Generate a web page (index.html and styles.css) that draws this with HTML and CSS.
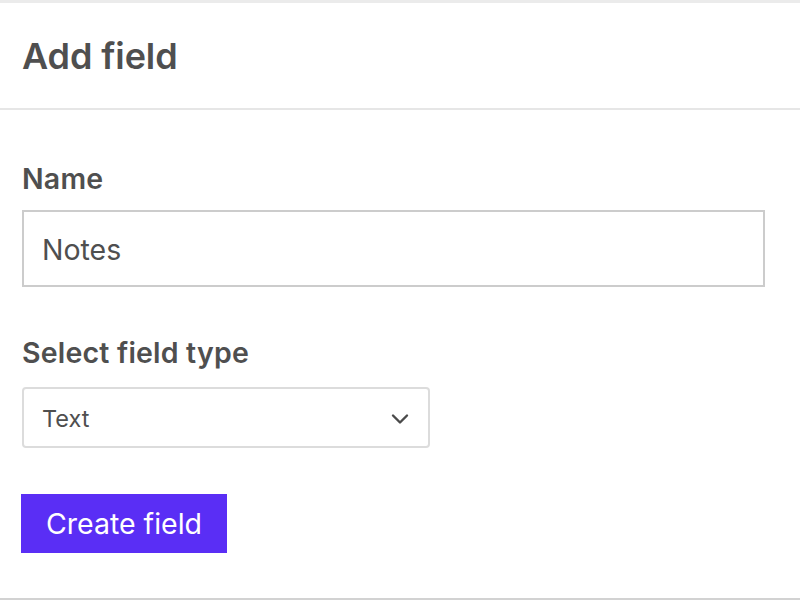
FILE: index.html
```html
<!DOCTYPE html>
<html lang="en">
<head>
<meta charset="utf-8">
<title>Add field</title>
<link rel="stylesheet" href="styles.css">
</head>
<body>
<div class="page">
  <header class="header">
    <h1 class="title">Add field</h1>
  </header>
  <form class="form">
    <label class="label label-name" for="name">Name</label>
    <input class="input" id="name" type="text" value="Notes">
    <label class="label label-type" for="type">Select field type</label>
    <div class="select" id="type">
      <span class="select-value">Text</span>
      <svg class="chevron" width="20" height="12" viewBox="0 0 20 12"><path d="M3 2.5 L10 9.5 L17 2.5" fill="none" stroke="#4a4a4a" stroke-width="2.4" stroke-linecap="round" stroke-linejoin="round"/></svg>
    </div>
    <button class="button" type="button">Create field</button>
  </form>
</div>
</body>
</html>
```
FILE: styles.css
```css
* { box-sizing: border-box; }
html, body { margin: 0; padding: 0; background: #fff; }
body {
  font-family: Inter, "Noto Sans", "Liberation Sans", sans-serif;
  color: #4f4f4f;
  width: 800px;
  height: 600px;
  overflow: hidden;
}
.page {
  height: 600px;
  display: flex;
  flex-direction: column;
  border-top: 3px solid #ebebeb;
  border-bottom: 2px solid #d2d2d2;
}
.header {
  height: 107px;
  border-bottom: 2px solid #e6e6e6;
  padding: 0 22px;
  display: flex;
  align-items: center;
}
.title {
  margin: 0;
  font-size: 36px;
  font-weight: 600;
  color: #4f4f4f;
  letter-spacing: -0.1px;
}
.form {
  padding: 0 22px;
  display: flex;
  flex-direction: column;
  align-items: flex-start;
}
.label {
  font-size: 28.5px;
  font-weight: 600;
  line-height: 34px;
  color: #4f4f4f;
  letter-spacing: 0.2px;
}
.label-name { margin-top: 52px; }
.label-type { margin-top: 49px; }
.input {
  margin-top: 14px;
  width: 743px;
  height: 77px;
  border: 2px solid #cccccc;
  border-radius: 0;
  padding: 2px 18px 0;
  font-family: inherit;
  font-size: 28.5px;
  color: #4f4f4f;
  outline: none;
  background: #fff;
}
.select {
  margin-top: 17px;
  width: 408px;
  height: 61px;
  border: 2px solid #dcdcdc;
  border-radius: 4px;
  padding: 2px 18px 0 18px;
  display: flex;
  align-items: center;
  justify-content: space-between;
}
.select-value {
  font-size: 23.5px;
  color: #4f4f4f;
}
.chevron { display: block; }
.button {
  margin-top: 46px;
  margin-left: -1px;
  width: 206px;
  height: 59px;
  background: #5a2ef5;
  border: 0;
  border-radius: 0;
  color: #fff;
  font-family: inherit;
  font-size: 28.5px;
  font-weight: 400;
  padding: 0;
}
```
